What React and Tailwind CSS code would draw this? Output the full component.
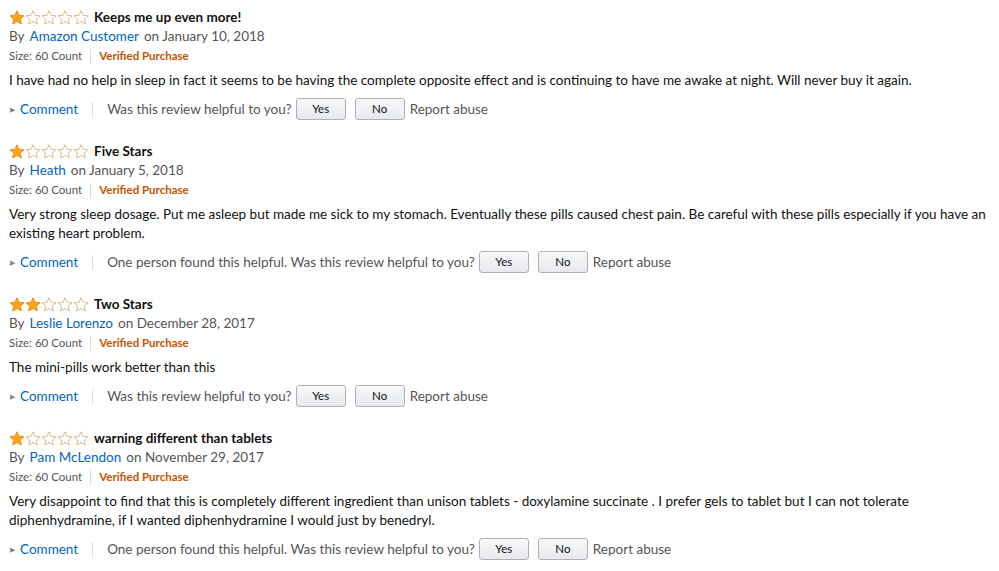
import React from "react";

const reviews = [
  {
    stars: 1,
    title: "Keeps me up even more!",
    author: "Amazon Customer",
    date: "January 10, 2018",
    body: "I have had no help in sleep in fact it seems to be having the complete opposite effect and is continuing to have me awake at night. Will never buy it again.",
    helpful: false,
  },
  {
    stars: 1,
    title: "Five Stars",
    author: "Heath",
    date: "January 5, 2018",
    body: "Very strong sleep dosage. Put me asleep but made me sick to my stomach. Eventually these pills caused chest pain. Be careful with these pills especially if you have an existing heart problem.",
    helpful: true,
  },
  {
    stars: 2,
    title: "Two Stars",
    author: "Leslie Lorenzo",
    date: "December 28, 2017",
    body: "The mini-pills work better than this",
    helpful: false,
  },
  {
    stars: 1,
    title: "warning different than tablets",
    author: "Pam McLendon",
    date: "November 29, 2017",
    body: "Very disappoint to find that this is completely different ingredient than unison tablets - doxylamine succinate . I prefer gels to tablet but I can not tolerate diphenhydramine, if I wanted diphenhydramine I would just by benedryl.",
    helpful: true,
  },
];

const Star = ({ filled }) => (
  <svg width="16" height="15" viewBox="0 0 24 23">
    <path
      d="M12 1.2l3.2 6.9 7.5.8-5.6 5.1 1.6 7.4L12 17.6l-6.7 3.8 1.6-7.4L1.3 8.9l7.5-.8z"
      fill={filled ? "#ffa41c" : "#fff"}
      stroke={filled ? "#e08a0a" : "#d9b27a"}
      strokeWidth="1.4"
      strokeLinejoin="round"
    />
  </svg>
);

const Btn = ({ children }) => (
  <button className="h-[22px] w-[50px] rounded-[3px] border border-[#adb1b8] bg-gradient-to-b from-[#f7f8fa] to-[#e7e9ec] text-[11.5px] text-[#111] shadow-[inset_0_1px_0_rgba(255,255,255,0.6)]">
    {children}
  </button>
);

const Review = ({ r }) => (
  <div className="mb-[22px]">
    <div className="flex h-[19px] items-center">
      <div className="flex w-[85px]">
        {[0, 1, 2, 3, 4].map(i => (
          <Star key={i} filled={i < r.stars} />
        ))}
      </div>
      <span className="text-[13.5px] font-bold text-[#111]">{r.title}</span>
    </div>
    <div className="flex h-[19px] items-center text-[13.5px] text-[#555]">
      <span>By</span>
      <span className="ml-[5px] text-[#0066c0]">{r.author}</span>
      <span className="ml-[5px]">on {r.date}</span>
    </div>
    <div className="flex h-5 items-center text-[11.5px]">
      <span className="text-[#555]">Size: 60 Count</span>
      <span className="mx-[8px] h-[15px] w-px bg-[#ddd]" />
      <span className="font-bold text-[#c45500]">Verified Purchase</span>
    </div>
    <p className="mt-[5px] text-[13.5px] leading-[19px] text-[#111]">{r.body}</p>
    <div className="mt-[8px] flex h-[22px] items-center text-[13.5px]">
      <span className="mr-[5px] ml-[1px] text-[7px] text-[#888]">&#9654;</span>
      <span className="text-[#0066c0]">Comment</span>
      <span className="ml-[14px] mr-[14px] h-[15px] w-px bg-[#ddd]" />
      <span className="mr-[4px] text-[#555]">
        {r.helpful ? "One person found this helpful. " : ""}Was this review helpful to you?
      </span>
      <Btn>Yes</Btn>
      <span className="w-[9px]" />
      <Btn>No</Btn>
      <span className="ml-[5px] text-[#555]">Report abuse</span>
    </div>
  </div>
);

export default function App() {
  return (
    <div className="min-h-screen w-[999px] bg-white pt-[8px] pl-[9px] pr-[8px] font-['Lato',sans-serif]">
      {reviews.map((r, i) => (
        <Review key={i} r={r} />
      ))}
    </div>
  );
}
